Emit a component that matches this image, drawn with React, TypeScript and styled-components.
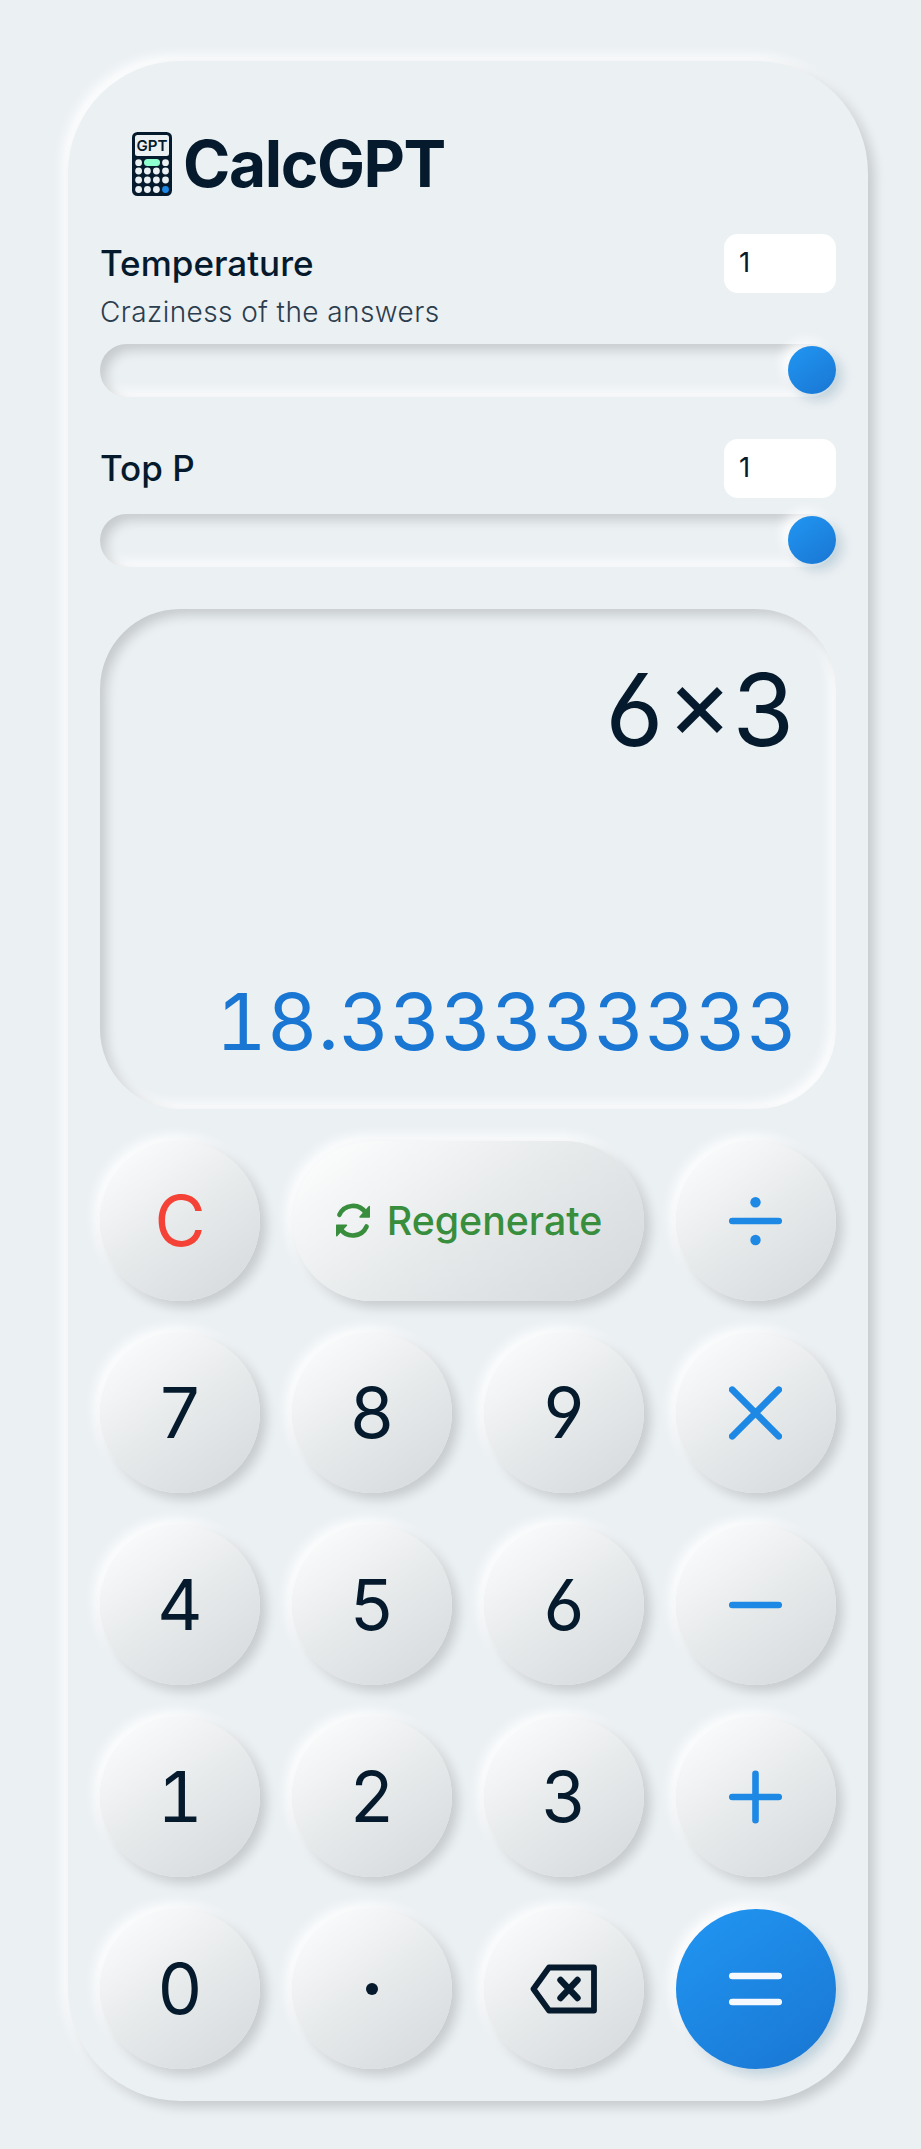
import React from "react";
import styled, { createGlobalStyle, css } from "styled-components";

const ink = "#051a2c";
const surface = "#ebf0f3";
const blue = "#1e88e5";
const raised = "6px 6px 12px rgba(0, 0, 0, 0.16), -6px -6px 12px rgba(255, 255, 255, 0.88)";
const raisedBlue = "6px 6px 12px rgba(0, 77, 115, 0.18), -6px -6px 12px rgba(255, 255, 255, 0.88)";
const sunken = "inset 6px 6px 12px rgba(0, 0, 0, 0.16), inset -6px -6px 12px rgba(255, 255, 255, 0.88)";

const GlobalStyle = createGlobalStyle`
  * { box-sizing: border-box; }
  body {
    margin: 0;
    background: ${surface};
    color: ${ink};
    font-family: Inter, "Liberation Sans", sans-serif;
  }
`;

const Page = styled.div`
  min-height: 2149px;
  padding: 61px 53px 48px 68px;
`;

const Shell = styled.main`
  display: flex;
  flex-direction: column;
  width: 800px;
  height: 2040px;
  padding: 63px 32px 32px;
  border-radius: 112px;
  background: ${surface};
  box-shadow: ${raised};
`;

const Brand = styled.header`
  display: flex;
  align-items: center;
  gap: 11px;
  height: 80px;
  padding-left: 32px;
  margin-bottom: 30px;
`;

const BrandName = styled.h1`
  margin: 0;
  font-size: 64px;
  font-weight: 700;
  line-height: 80px;
  letter-spacing: -1.4px;
`;

const Settings = styled.div`
  display: flex;
  flex-direction: column;
  gap: 42px;
`;

const Setting = styled.section<{ $height: number }>`
  display: flex;
  flex-direction: column;
  justify-content: space-between;
  height: ${(p) => p.$height}px;
`;

const SettingHead = styled.div`
  display: flex;
  justify-content: space-between;
  align-items: flex-start;
  height: 59px;
`;

const SettingLabel = styled.label`
  font-size: 35px;
  font-weight: 500;
  line-height: 58px;
`;

const SettingHint = styled.p`
  height: 51px;
  margin: -13px 0 0;
  font-size: 28px;
  font-weight: 300;
  line-height: 51px;
  letter-spacing: 0.42px;
  color: #2c3d4e;
`;

const NumberField = styled.input`
  width: 112px;
  height: 59px;
  padding: 0 14px 4px 15px;
  border: 0;
  border-radius: 14px;
  background: #fff;
  color: ${ink};
  font: 400 27.5px Inter, "Liberation Sans", sans-serif;
`;

const Track = styled.div`
  display: flex;
  align-items: flex-start;
  justify-content: flex-end;
  height: 53px;
  padding-top: 2px;
  border-radius: 27px;
  box-shadow: ${sunken};
`;

const Thumb = styled.div`
  width: 48px;
  height: 48px;
  border-radius: 50%;
  background: linear-gradient(145deg, #2196f3, #1976d2);
  box-shadow: ${raisedBlue};
`;

const Display = styled.section`
  display: flex;
  flex-direction: column;
  justify-content: space-between;
  align-items: flex-end;
  height: 500px;
  margin: 42px 0 32px;
  padding: 41px 38.5px 39px 40px;
  border-radius: 80px;
  box-shadow: ${sunken};
  font-feature-settings: "tnum", "cv03", "cv04", "case";
`;

const Expression = styled.div`
  font-size: 100px;
  line-height: 120px;
  letter-spacing: 0.3px;
`;

const Result = styled.div`
  color: #1976d2;
  font-size: 78.6px;
  line-height: 96px;
`;

const Keypad = styled.div`
  display: grid;
  grid-template-columns: repeat(4, 160px);
  grid-auto-rows: 160px;
  gap: 32px;
`;

type Tone = "digit" | "clear" | "operator" | "equals" | "action";

const toneColor: Record<Tone, string> = {
  digit: ink,
  clear: "#f44336",
  operator: blue,
  equals: "#f5f9fe",
  action: "#388e3c",
};

const Key = styled.button<{ $tone: Tone; $icon?: boolean }>`
  display: flex;
  align-items: center;
  justify-content: center;
  gap: 17px;
  padding: ${(p) => (p.$icon ? "0 1px 1px 0" : "0 0 2px")};
  border: 0;
  border-radius: 80px;
  color: ${(p) => toneColor[p.$tone]};
  background: linear-gradient(145deg, #ffffff 0%, #f1f3f4 28%, #e7eaeb 50%, #d4d8db 100%);
  box-shadow: ${raised};
  font-family: inherit;
  font-size: 70px;
  font-feature-settings: "tnum", "cv03", "cv04", "case";
  ${(p) =>
    p.$tone === "action" &&
    css`
      grid-column: span 2;
      padding: 0 0 1px 2px;
      font-size: 39.3px;
      font-weight: 500;
    `}
  ${(p) =>
    p.$tone === "equals" &&
    css`
      background: linear-gradient(145deg, #2196f3, #1976d2);
      box-shadow: ${raisedBlue};
    `}
`;

const Glyph = styled.svg`
  display: block;
  flex: none;
  fill: none;
  stroke: currentColor;
  stroke-linecap: round;
  stroke-linejoin: round;
`;

const logoRows = [30.7, 39, 48, 57.5];
const logoColumns = [6.6, 15.4, 24.4, 33.5];

function Logo() {
  return (
    <svg width="40" height="64" viewBox="0 0 40 64">
      <rect width="40" height="64" rx="5.5" fill={ink} />
      <rect x="3" y="3" width="34" height="21" rx="2.5" fill={surface} />
      <text x="20" y="19.2" textAnchor="middle" fontSize="15" fontWeight="600" fill={ink} textLength="31" lengthAdjust="spacingAndGlyphs">
        GPT
      </text>
      {logoRows.map((y, row) =>
        logoColumns.map((x, column) => {
          if (row === 0 && (column === 1 || column === 2)) return null;
          const isEquals = row === 3 && column === 3;
          return <circle key={`${row}-${column}`} cx={x} cy={y} r="3.4" fill={isEquals ? blue : surface} />;
        })
      )}
      <rect x="12" y="27" width="16" height="7" rx="3.5" fill="#8effce" />
    </svg>
  );
}

const operatorShapes: Record<string, React.ReactNode> = {
  divide: (
    <>
      <path d="M3.2 30h46.6" />
      <circle cx="26.5" cy="11.2" r="5.2" fill="currentColor" stroke="none" />
      <circle cx="26.5" cy="49" r="5.2" fill="currentColor" stroke="none" />
    </>
  ),
  times: <path d="M3.2 6.7l46.6 46.6M49.8 6.7L3.2 53.3" />,
  minus: <path d="M3.2 30h46.6" />,
  plus: <path d="M3.2 30h46.6M26.5 6.7v46.6" />,
  equals: <path d="M3.2 17h46.6M3.2 43h46.6" />,
};

const RefreshIcon = () => (
  <Glyph width="34" height="37" viewBox="0 0 34 37" strokeWidth="4.6">
    <path d="M3.4 12.8A15 15 0 0 1 29.5 10.5M30.6 24.5A15 15 0 0 1 4.5 26.9" />
    <path d="M33.3 4.5v10.5H24zM.7 23.2V33.7L10.5 23.2z" fill="currentColor" strokeWidth="1.4" />
  </Glyph>
);

const BackspaceIcon = () => (
  <Glyph width="67" height="50" viewBox="0 0 67 50" strokeWidth="5.8">
    <path d="M19 3.5H64V46.5H19L3.5 25z" />
    <path d="M30.5 16L47.5 34M47.5 16L30.5 34" strokeWidth="6.4" />
  </Glyph>
);

const DotIcon = () => (
  <Glyph width="12" height="12" viewBox="0 0 12 12">
    <circle cx="6" cy="6" r="6" fill="currentColor" stroke="none" />
  </Glyph>
);

const Digit = ({ value }: { value: string }) => <Key $tone="digit">{value}</Key>;

const Operator = ({ name }: { name: string }) => (
  <Key $icon $tone={name === "equals" ? "equals" : "operator"} aria-label={name}>
    <Glyph width="53" height="60" viewBox="0 0 53 60" strokeWidth="6.6">
      {operatorShapes[name]}
    </Glyph>
  </Key>
);

export default function App() {
  return (
    <Page>
      <GlobalStyle />
      <Shell>
        <Brand>
          <Logo />
          <BrandName>CalcGPT</BrandName>
        </Brand>
        <Settings>
          <Setting $height={163}>
            <SettingHead>
              <SettingLabel htmlFor="temperature">Temperature</SettingLabel>
              <NumberField id="temperature" defaultValue="1" />
            </SettingHead>
            <SettingHint>Craziness of the answers</SettingHint>
            <Track>
              <Thumb />
            </Track>
          </Setting>
          <Setting $height={128}>
            <SettingHead>
              <SettingLabel htmlFor="top-p">Top P</SettingLabel>
              <NumberField id="top-p" defaultValue="1" />
            </SettingHead>
            <Track>
              <Thumb />
            </Track>
          </Setting>
        </Settings>
        <Display>
          <Expression>6×3</Expression>
          <Result>18.333333333</Result>
        </Display>
        <Keypad>
          <Key $tone="clear">C</Key>
          <Key $tone="action">
            <RefreshIcon />
            Regenerate
          </Key>
          <Operator name="divide" />
          <Digit value="7" />
          <Digit value="8" />
          <Digit value="9" />
          <Operator name="times" />
          <Digit value="4" />
          <Digit value="5" />
          <Digit value="6" />
          <Operator name="minus" />
          <Digit value="1" />
          <Digit value="2" />
          <Digit value="3" />
          <Operator name="plus" />
          <Digit value="0" />
          <Key $icon $tone="digit" aria-label="decimal point">
            <DotIcon />
          </Key>
          <Key $icon $tone="digit" aria-label="backspace">
            <BackspaceIcon />
          </Key>
          <Operator name="equals" />
        </Keypad>
      </Shell>
    </Page>
  );
}
